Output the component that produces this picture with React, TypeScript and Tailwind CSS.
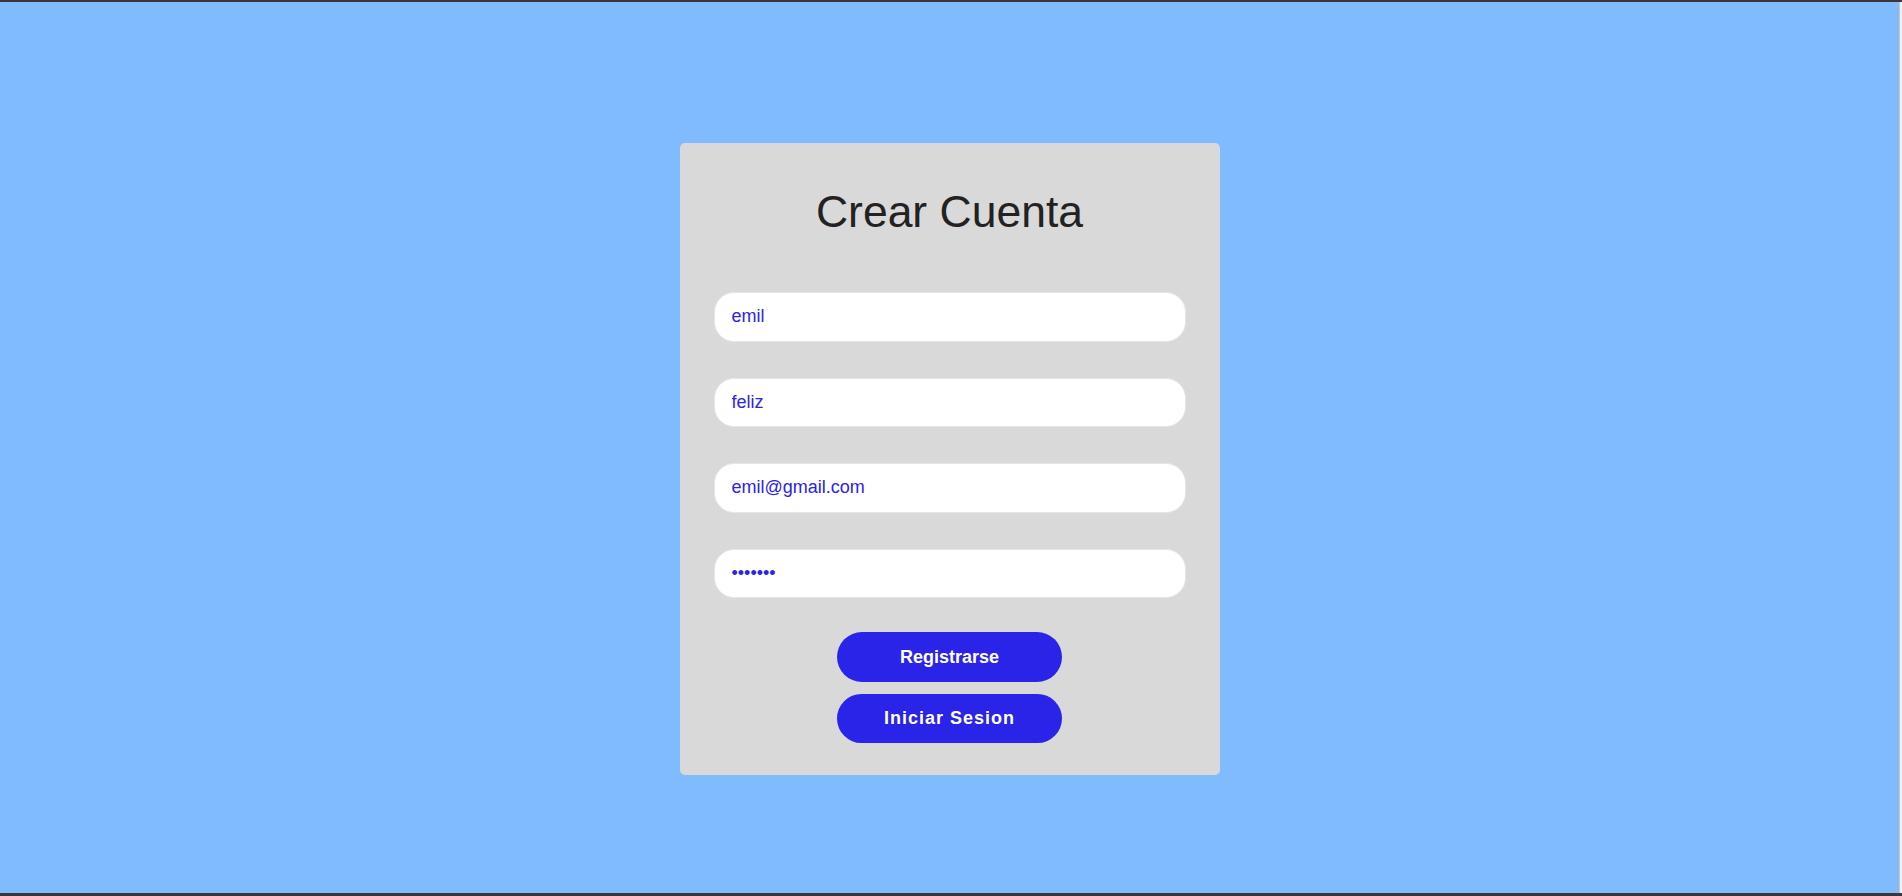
import React from "react";

const fields = [
  { type: "text", value: "emil" },
  { type: "text", value: "feliz" },
  { type: "email", value: "emil@gmail.com" },
  { type: "password", value: "1234567" },
];

export default function App() {
  return (
    <div className="h-screen w-full flex flex-col border-t-2 border-b-[3px] border-[#38353b] font-['Liberation_Sans',Arial,sans-serif]">
      <div className="flex flex-1 min-h-0">
        <main className="flex-1 bg-[#80bbff] flex justify-center pt-[141px]">
          <div className="w-[540px] h-[632px] bg-[#d9d9d9] rounded-[5px] px-[34px] pt-[43px] flex flex-col">
            <h1 className="text-center text-[44.5px] leading-[51px] text-[#222222]">Crear Cuenta</h1>

            <form className="mt-[55px] flex flex-col gap-[36px]">
              {fields.map((f) => (
                <input
                  key={f.value}
                  type={f.type}
                  defaultValue={f.value}
                  readOnly
                  className="h-[49.5px] w-full rounded-[20px] bg-white border border-[#e6e6e6] px-[17px] text-[18px] text-[#2a24e8] outline-none"
                />
              ))}
            </form>

            <div className="mt-[34px] flex flex-col items-center gap-[12px]">
              <button className="w-[225px] h-[50px] rounded-full bg-[#2a24e8] text-white font-bold text-[18px]">
                Registrarse
              </button>
              <button className="w-[225px] h-[49px] rounded-full bg-[#2a24e8] text-white font-bold text-[18px] tracking-[1px]">
                Iniciar Sesion
              </button>
            </div>
          </div>
        </main>
        <div className="w-[3px] border-l border-[#c6c6c6] bg-[#f1f1f1]" />
      </div>
    </div>
  );
}
